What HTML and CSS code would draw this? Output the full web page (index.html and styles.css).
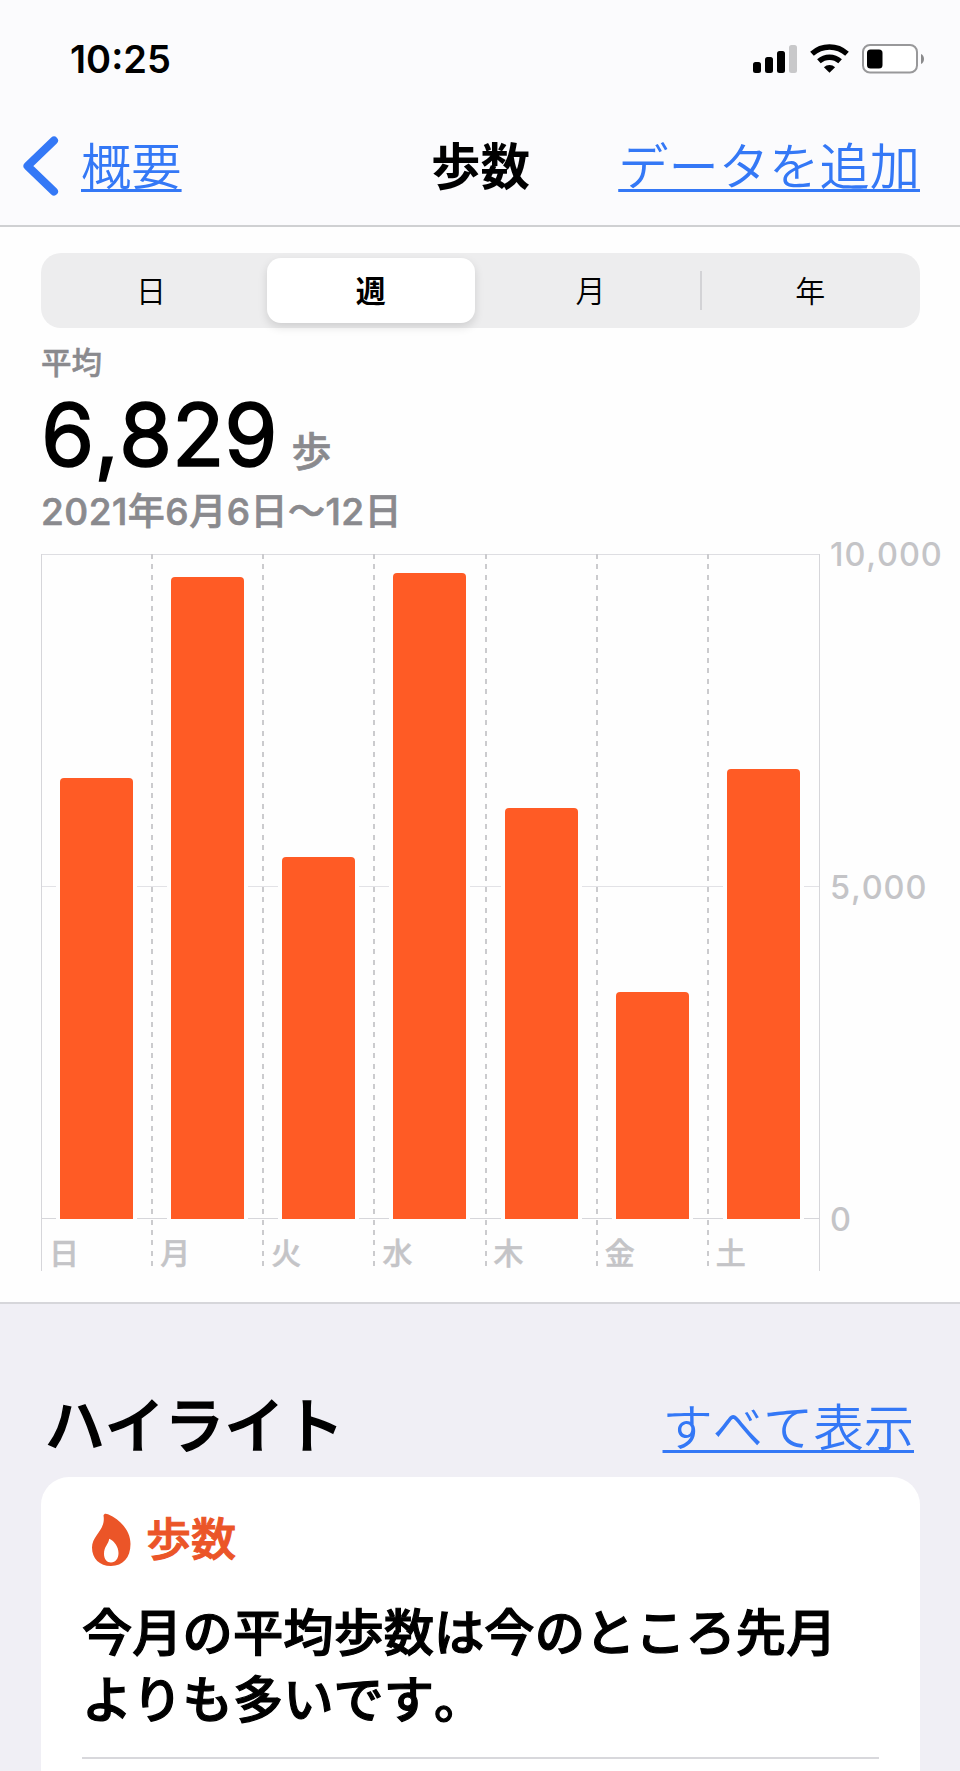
FILE: index.html
```html
<!DOCTYPE html>
<html lang="ja">
<head>
    <meta charset="UTF-8">
    <meta name="viewport" content="width=device-width, initial-scale=1.0">
    <title>歩数</title>

    <link rel="stylesheet" href="styles.css">
</head>
<body>

    <header class="header">

        <div class="status">
            <div class="time">10:25</div>

            <svg class="status_icons" width="176" height="32" viewBox="0 0 176 32">
                <rect x="1" y="19" width="8" height="11" rx="2.5"/>
                <rect x="13" y="14" width="8" height="16" rx="2.5"/>
                <rect x="25" y="8" width="8" height="22" rx="2.5"/>
                <rect x="37" y="2" width="8" height="28" rx="2.5" fill="#c8c8ca"/>

                <g fill="none" stroke="#000" stroke-width="5.4">
                    <path d="M60 10.8a26 26 0 0 1 35 0"/>
                    <path d="M66.9 18.3a16 16 0 0 1 21.2 0"/>
                </g>
                <path d="M77.5 29.8l-5.6-5.6a8.5 8.5 0 0 1 11.2 0z"/>

                <rect x="111" y="2" width="54" height="27.5" rx="7" fill="#fff" stroke="#98989a" stroke-width="2"/>
                <rect x="115" y="6.5" width="15.5" height="19" rx="3.5"/>
                <path d="M169 11c4 1.500 4 8.500 0 10z" fill="#8a8a8c"/>
            </svg>
        </div>

        <nav class="nav">
            <div class="nav_back">
                <svg width="36" height="62" viewBox="0 0 36 62">
                    <path d="M31 5.500L4.500 31L31 56.500" fill="none" stroke="#3478f6" stroke-width="8" stroke-linecap="round" stroke-linejoin="round"/>
                </svg>
                <a class="link">概要</a>
            </div>
            <div class="nav_title">歩数</div>
            <a class="link nav_add">データを追加</a>
        </nav>

    </header>

    <main class="steps">

        <div class="tabs">
            <div class="tab">日</div>
            <div class="tab tab_on">週</div>
            <div class="tab">月</div>
            <div class="tab tab_line">年</div>
        </div>

        <div class="average">平均</div>
        <div class="total"><span class="number">6,829</span><span class="unit">歩</span></div>
        <div class="date">2021年6月6日〜12日</div>

        <div class="chart">
            <div class="plot">
                <div class="day"><div class="area"><div class="bar" style="height: 441px"></div></div><div class="day_name">日</div></div>
                <div class="day"><div class="area"><div class="bar" style="height: 642px"></div></div><div class="day_name">月</div></div>
                <div class="day"><div class="area"><div class="bar" style="height: 362px"></div></div><div class="day_name">火</div></div>
                <div class="day"><div class="area"><div class="bar" style="height: 646px"></div></div><div class="day_name">水</div></div>
                <div class="day"><div class="area"><div class="bar" style="height: 411px"></div></div><div class="day_name">木</div></div>
                <div class="day"><div class="area"><div class="bar" style="height: 227px"></div></div><div class="day_name">金</div></div>
                <div class="day"><div class="area"><div class="bar" style="height: 450px"></div></div><div class="day_name">土</div></div>
            </div>
            <div class="scale">
                <div>10,000</div>
                <div>5,000</div>
                <div>0</div>
            </div>
        </div>

    </main>

    <section class="highlights">

        <div class="highlights_top">
            <h2>ハイライト</h2>
            <a class="link">すべて表示</a>
        </div>

        <div class="card">
            <div class="card_title">
                <svg width="40" height="54" viewBox="0 0 40 54">
                    <path fill="#eb5528" fill-rule="evenodd" d="M12.500 2.500C13 0 15.500 .600 17 1.300C30 7 39.500 18 39.500 31C39.500 44.500 32 53 20 53C8.500 53 1 45.500 1 34.500C1 22.500 15 17 12.500 2.500ZM18.200 25.800C17.500 31.500 13 33.500 13 41C13 46 16 49.500 20 49.500C24.500 49.500 27.500 45.500 27.500 40C27.500 34 23.500 28 18.200 25.800Z"/>
                </svg>
                <span>歩数</span>
            </div>
            <p class="card_text">今月の平均歩数は今のところ先月よりも多いです。</p>
        </div>

    </section>

</body>
</html>
```

FILE: styles.css
```css
*{
    box-sizing: border-box;
}

body{
    margin: 0;
    height: 1771px;
    overflow: hidden;
    background-color: #f0eff5;
    color: black;
    font-family: Inter, "Noto Sans CJK JP", sans-serif;
    font-kerning: none;
}

.header{
    height: 227px;
    background-color: #fbfbfd;
    border-bottom: 2px solid #cfd0d2;
}

.status{
    display: flex;
    justify-content: space-between;
    align-items: flex-start;
    height: 120px;
    padding: 43px 32px 0 70px;
}

.time{
    font-size: 38px;
    font-weight: 600;
    line-height: 32px;
}

.nav{
    display: grid;
    grid-template-columns: 1fr auto 1fr;
    align-items: center;
    height: 94px;
    padding: 0 40px 0 23px;
}

.nav_back{
    display: flex;
    align-items: center;
    gap: 22px;
}

.nav_back svg{
    margin-top: -3px;
}

.nav_title{
    margin-left: 18px;
    font-size: 49.5px;
    font-weight: 700;
    line-height: 62px;
}

.nav_add{
    justify-self: end;
}

.link{
    color: #3478f6;
    font-size: 50.3px;
    font-weight: 350;
    line-height: 60px;
    text-decoration: underline;
    text-decoration-thickness: 3px;
    text-decoration-skip-ink: none;
    text-underline-offset: 4px;
}

.steps{
    height: 1077px;
    padding: 26px 0 0 41px;
    background-color: #fefefe;
    border-bottom: 2px solid #d6d6da;
}

.tabs{
    display: grid;
    grid-template-columns: repeat(4, 1fr);
    width: 879px;
    height: 75px;
    padding: 5px 0;
    background-color: #ededee;
    border-radius: 20px;
}

.tab{
    height: 65px;
    font-size: 30px;
    font-weight: 350;
    line-height: 67px;
    text-align: center;
}

.tab_on{
    margin: 0 6px;
    background-color: white;
    border-radius: 14px;
    font-weight: 700;
    box-shadow: 0 4px 10px rgba(0, 0, 0, 0.13);
}

.tab_line{
    background: linear-gradient(#d3d3d6, #d3d3d6) no-repeat 0 13px / 2px 39px;
}

.average{
    margin-top: 16px;
    color: #8a8a8e;
    font-size: 30.5px;
    font-weight: 500;
    line-height: 38px;
    -webkit-text-stroke: 0.5px #8a8a8e;
}

.total{
    display: flex;
    align-items: baseline;
    height: 98px;
    padding-top: 4px;
    line-height: 98px;
}

.number{
    font-size: 86px;
    font-weight: 400;
    letter-spacing: -0.1px;
    -webkit-text-stroke: 1.6px black;
    stroke-linejoin: round;
}

.unit{
    margin-left: 14px;
    color: #8a8a8e;
    font-size: 40px;
    font-weight: 500;
    -webkit-text-stroke: 0.7px #8a8a8e;
}

.date{
    height: 74px;
    color: #8a8a8e;
    font-size: 37px;
    font-weight: 500;
    letter-spacing: 0.5px;
    line-height: 63px;
    -webkit-text-stroke: 0.7px #8a8a8e;
}

.chart{
    display: flex;
    gap: 10px;
}

/* horizontal lines at 10,000, 5,000 and 0 */
.plot{
    display: flex;
    width: 779px;
    height: 717px;
    border-right: 1px solid #d6d6da;
    background:
        linear-gradient(#dedee2, #dedee2) no-repeat 0 0 / 100% 1px,
        linear-gradient(#e2e2e6, #e2e2e6) no-repeat 0 332px / 100% 1px,
        linear-gradient(#d6d6da, #d6d6da) no-repeat 0 664px / 100% 1px;
}

.day{
    flex: 1;
    margin-left: -1px;
    padding-left: 1px;
    background: repeating-linear-gradient(#cbcbce 0 5px, transparent 5px 10.4px) no-repeat 0 0 / 2px 714px;
}

.day:first-child{
    margin-left: 0;
    padding-left: 0;
    background: linear-gradient(#d6d6da, #d6d6da) no-repeat 0 0 / 1px 717px;
}

.area{
    display: flex;
    align-items: flex-end;
    height: 665px;
    padding-left: 19px;
}

.bar{
    width: 73px;
    background-color: #ff5b25;
    border-radius: 4px 4px 0 0;
    box-shadow: 0 0 0 4px #fefefe;
}

.day_name{
    padding-left: 8px;
    color: #c4c4c7;
    font-size: 30px;
    font-weight: 500;
    line-height: 68px;
    -webkit-text-stroke: 0.5px #c4c4c7;
}

.scale{
    display: flex;
    flex-direction: column;
    justify-content: space-between;
    height: 705px;
    margin-top: -19px;
    color: #c4c4c7;
    font-size: 32.5px;
    font-weight: 450;
    letter-spacing: 0.9px;
    line-height: 40px;
}

.highlights{
    padding: 86px 40px 0 41px;
}

.highlights_top{
    display: flex;
    justify-content: space-between;
    height: 87px;
    padding: 0 6px 0 4px;
}

.highlights_top .link{
    padding-top: 8px;
}

.highlights_top h2{
    margin: 0;
    font-size: 59.800px;
    font-weight: 500;
    line-height: 72px;
    -webkit-text-stroke: 1.5px black;
}

.card{
    height: 320px;
    padding: 36px 41px 0;
    background-color: white;
    border-radius: 28px;
}

.card_title{
    display: flex;
    align-items: center;
    gap: 15px;
    height: 54px;
    padding-left: 9px;
    color: #eb5528;
    font-size: 45px;
    font-weight: 500;
    line-height: 54px;
    -webkit-text-stroke: 1px #eb5528;
}

.card_text{
    margin: 33px 0 0;
    height: 159px;
    border-bottom: 2px solid #d8d8dc;
    font-size: 50.3px;
    font-weight: 500;
    line-height: 66.600px;
    -webkit-text-stroke: 1.2px black;
}
```
